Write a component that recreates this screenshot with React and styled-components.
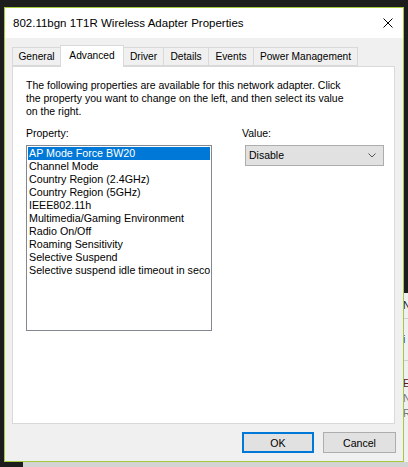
import React from 'react';
import styled, { createGlobalStyle } from 'styled-components';

const GlobalStyle = createGlobalStyle`
  html, body {
    margin: 0;
    padding: 0;
    background: #1c1c1c;
  }
  * {
    box-sizing: border-box;
  }
`;

const Desktop = styled.div`
  position: relative;
  width: 408px;
  height: 467px;
  overflow: hidden;
  background: #1d1d1d;
  font-family: 'Liberation Sans', Arial, sans-serif;
`;

/* windows peeking out from behind the dialog */
const BackWindow = styled.div`
  position: absolute;
  left: 402px;
  top: 293px;
  width: 120px;
  height: 200px;
  background: #f0f0f0;
  display: flex;
  flex-direction: column;
  font-size: 10.5px;
`;

const BackRow = styled.div`
  height: ${(p) => p.h}px;
  padding-top: ${(p) => p.pt || 0}px;
  padding-left: 1px;
  color: ${(p) => p.color || '#222'};
  border-bottom: ${(p) => (p.line ? '1px solid #cfcfcf' : 'none')};
  line-height: 15px;
  white-space: nowrap;
`;

const BackStrip = styled.div`
  position: absolute;
  left: 23px;
  top: 462px;
  width: 400px;
  height: 10px;
  background: #d3d3d3;
`;

const Window = styled.div`
  position: absolute;
  left: 4px;
  top: 7px;
  width: 400px;
  height: 455px;
  border: 1px solid #a4c93c;
  background: #f0f0f0;
  display: flex;
  flex-direction: column;
`;

const TitleBar = styled.div`
  height: 30px;
  background: #ffffff;
  display: flex;
  align-items: center;
  justify-content: space-between;
  padding: 0 10px 0 8px;
  font-size: 11.5px;
  color: #000;
`;

const Body = styled.div`
  flex: 1;
  display: flex;
  flex-direction: column;
  padding: 7px 7px 8px 7px;
`;

const TabRow = styled.div`
  position: relative;
  z-index: 1;
  height: 21px;
  display: flex;
  align-items: flex-end;
`;

const Tab = styled.div`
  width: ${(p) => p.w}px;
  height: ${(p) => (p.active ? 22 : 19)}px;
  margin-left: -1px;
  margin-bottom: ${(p) => (p.active ? -1 : 0)}px;
  position: relative;
  z-index: ${(p) => (p.active ? 2 : 1)};
  border: 1px solid #d9d9d9;
  border-bottom: ${(p) => (p.active ? 'none' : '1px solid #d9d9d9')};
  background: ${(p) => (p.active ? '#ffffff' : '#f0f0f0')};
  font-size: 10.2px;
  color: #000;
  display: flex;
  justify-content: center;
  padding-top: ${(p) => (p.active ? 3 : 2)}px;
  line-height: 13px;

  &:first-child {
    margin-left: 0;
  }
`;

const Panel = styled.div`
  flex: 1;
  margin-right: 1px;
  background: #ffffff;
  border: 1px solid #d9d9d9;
  padding: 12px 13px;
  font-size: 10.5px;
  line-height: 13px;
  color: #000;
`;

const Intro = styled.p`
  margin: 0;
  width: 329px;
`;

const Fields = styled.div`
  display: grid;
  grid-template-columns: 186px 1fr;
  column-gap: 30px;
  margin-top: 9px;
`;

const Field = styled.div`
  display: flex;
  flex-direction: column;
`;

const Label = styled.div`
  height: 13px;
  margin-bottom: 5px;
`;

const ListBox = styled.div`
  width: 186px;
  height: 186px;
  border: 1px solid #828790;
  padding: 1px 1px 0 1px;
  overflow: hidden;
`;

const Item = styled.div`
  height: 13px;
  line-height: 13px;
  padding-left: 1px;
  font-size: 10.7px;
  white-space: nowrap;
  overflow: hidden;
  background: ${(p) => (p.selected ? '#0078d7' : 'transparent')};
  color: ${(p) => (p.selected ? '#ffffff' : '#000000')};
`;

const Select = styled.div`
  margin-left: 3px;
  width: 139px;
  height: 21px;
  border: 1px solid #adadad;
  background: #e1e1e1;
  display: flex;
  align-items: center;
  justify-content: space-between;
  padding: 0 7px 0 3px;
  font-size: 10.5px;
`;

const ButtonRow = styled.div`
  display: flex;
  justify-content: flex-end;
  gap: 9px;
  margin-top: 8px;
`;

const Button = styled.div`
  width: ${(p) => p.w}px;
  height: 21px;
  border: ${(p) => (p.primary ? '2px solid #0078d7' : '1px solid #adadad')};
  background: #e1e1e1;
  display: flex;
  align-items: center;
  justify-content: center;
  font-size: 10.6px;
  color: #000;
`;

const tabs = [
  { label: 'General', w: 49 },
  { label: 'Advanced', w: 64, active: true },
  { label: 'Driver', w: 41 },
  { label: 'Details', w: 46 },
  { label: 'Events', w: 46 },
  { label: 'Power Management', w: 105 },
];

const properties = [
  'AP Mode Force BW20',
  'Channel Mode',
  'Country Region (2.4GHz)',
  'Country Region (5GHz)',
  'IEEE802.11h',
  'Multimedia/Gaming Environment',
  'Radio On/Off',
  'Roaming Sensitivity',
  'Selective Suspend',
  'Selective suspend idle timeout in seconds',
];

const CloseIcon = () => (
  <svg width="10" height="10" viewBox="0 0 10 10">
    <path d="M0.5 0.5 L9.5 9.5 M9.5 0.5 L0.5 9.5" stroke="#000" strokeWidth="1" fill="none" />
  </svg>
);

const Chevron = () => (
  <svg width="8" height="5" viewBox="0 0 8 5">
    <path d="M0.5 0.5 L4 4 L7.5 0.5" stroke="#555" strokeWidth="1" fill="none" />
  </svg>
);

const App = () => (
  <>
    <GlobalStyle />
    <Desktop>
      <BackWindow>
        <BackRow h={26} pt={5} line>N</BackRow>
        <BackRow h={42} pt={13} color="#3b3b8f" line>i</BackRow>
        <BackRow h={15} color="#5a1a1a" />
        <BackRow h={15} color="#5a1a1a">E</BackRow>
        <BackRow h={15} color="#777">N</BackRow>
        <BackRow h={15} color="#777">R</BackRow>
      </BackWindow>
      <BackStrip />
      <Window>
        <TitleBar>
          <span>802.11bgn 1T1R Wireless Adapter Properties</span>
          <CloseIcon />
        </TitleBar>
        <Body>
          <TabRow>
            {tabs.map((t) => (
              <Tab key={t.label} w={t.w} active={t.active}>
                {t.label}
              </Tab>
            ))}
          </TabRow>
          <Panel>
            <Intro>
              The following properties are available for this network adapter. Click
              the property you want to change on the left, and then select its value
              on the right.
            </Intro>
            <Fields>
              <Field>
                <Label>Property:</Label>
                <ListBox>
                  {properties.map((p, i) => (
                    <Item key={p} selected={i === 0}>
                      {p}
                    </Item>
                  ))}
                </ListBox>
              </Field>
              <Field>
                <Label>Value:</Label>
                <Select>
                  <span>Disable</span>
                  <Chevron />
                </Select>
              </Field>
            </Fields>
          </Panel>
          <ButtonRow>
            <Button primary w={72}>OK</Button>
            <Button w={73}>Cancel</Button>
          </ButtonRow>
        </Body>
      </Window>
    </Desktop>
  </>
);

export default App;
